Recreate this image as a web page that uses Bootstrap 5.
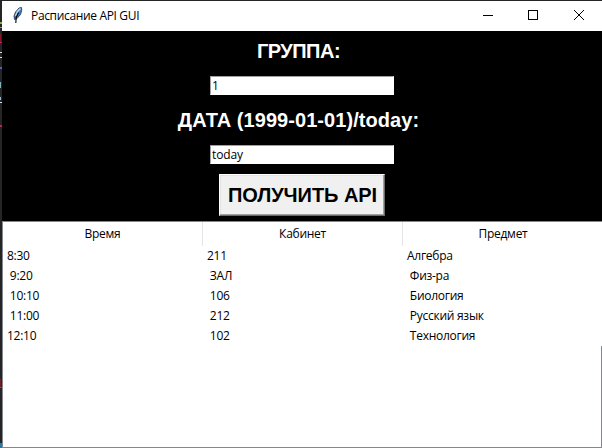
<!DOCTYPE html>
<html lang="ru">
<head>
<meta charset="utf-8">
<title>Расписание API GUI</title>
<link href="https://cdn.jsdelivr.net/npm/bootstrap@5.3.0/dist/css/bootstrap.min.css" rel="stylesheet">
<style>
  body { width: 602px; height: 448px; background: #252525; font: 12px/20px "Open Sans", "Noto Sans", sans-serif; color: #000; letter-spacing: -.27px; }
  .desk { width: 602px; height: 448px; padding: 1px 0 0 2px;
    background:
      linear-gradient(#8bb42a, #8bb42a) 0 22px / 2px 2px no-repeat,
      linear-gradient(#8bb42a, #8bb42a) 0 27px / 2px 1px no-repeat,
      linear-gradient(#7d1f22, #7d1f22) 0 34px / 1px 8px no-repeat,
      linear-gradient(#e0146a, #e0146a) 0 42px / 2px 1px no-repeat,
      linear-gradient(#ddd, #ddd) 0 52px / 2px 1px no-repeat,
      linear-gradient(#ddd, #ddd) 0 57px / 2px 1px no-repeat,
      linear-gradient(#4a63c0, #4a63c0) 0 67px / 2px 2px no-repeat,
      linear-gradient(#7fb5c0, #7fb5c0) 0 82px / 1px 6px no-repeat,
      linear-gradient(#8fb8e8, #8fb8e8) 0 97px / 1px 3px no-repeat,
      linear-gradient(#ddd, #ddd) 0 102px / 2px 1px no-repeat,
      linear-gradient(#c02060, #c02060) 0 125px / 2px 2px no-repeat,
      linear-gradient(#7d1f22, #7d1f22) 0 379px / 1px 8px no-repeat,
      linear-gradient(#e0146a, #e0146a) 0 387px / 2px 1px no-repeat,
      linear-gradient(#1a7db0, #1a7db0) 0 443px / 2px 5px no-repeat,
      #252525; }
  .titlebar { height: 30px; padding-left: 9px; }
  .feather { margin-bottom: 2px; }
  .caption { margin-left: 7px; letter-spacing: -.34px; }
  .form-area { height: 190px; }
  .form-title { font: bold 20px/24px "Liberation Sans", Arial, sans-serif; letter-spacing: .06px; margin-right: 7px; }
  .group-title { letter-spacing: -.5px; }
  .entry { width: 184px; height: 19px; margin-top: 13px; padding: 0 1px; font: inherit; letter-spacing: -.15px; line-height: 17px; color: #000; background: #fff; border: 1px solid; border-color: #a0a0a0 #fff #fff #a0a0a0; border-radius: 0; outline: 0; }
  .date-title { margin-top: 13px; }
  .tk-button { width: 166px; height: 42px; margin-top: 10px; padding: 0 0 0 1px; color: #000; background: #f0f0f0; border: 1px solid; border-color: #fff #696969 #696969 #fff; box-shadow: inset -1px -1px #a0a0a0, inset 1px 1px #e3e3e3; font: bold 20px/38px "Liberation Sans", Arial, sans-serif; letter-spacing: -.05px; }
  .tree { border-top: 1px solid #828790; border-left: 1px solid #828790; border-bottom: 1px solid #828790; height: 227px; }
  .cells > div { width: 200px; flex: none; white-space: pre; }
  .heads { height: 24px; line-height: 24px; text-align: center; }
  .heads > div { border-right: 1px solid #e5e5e5; }
  .heads > div:last-child { border: 0; }
  .line { height: 20px; }
  .line > div { padding-left: 4px; }
  .rest { border-right: 1px solid #828790; }
</style>
<script src="https://cdn.jsdelivr.net/npm/bootstrap@5.3.0/dist/js/bootstrap.bundle.min.js"></script>
</head>
<body class="m-0 overflow-hidden">
<div class="desk d-flex flex-column">
  <header class="titlebar bg-white d-flex align-items-center">
    <svg class="feather" width="13" height="18" viewBox="0 0 13 18">
      <path d="M10.500 1.500 8 2 4.500 6 3 10l.5 3.500 2.500-1L9.500 8.500l1.200-4z" fill="#3d7cc4" stroke="#27303f" stroke-width=".8"/>
      <path d="M9.500 2.500 6.500 5.500 4.500 10" fill="none" stroke="#b8dcf8" stroke-width="1.500"/>
      <path d="M7.500 6.500 5.200 11.500 4.800 17" fill="none" stroke="#000" stroke-width="1.100"/>
    </svg>
    <span class="caption">Расписание API GUI</span>
    <svg class="ms-auto" width="119" height="30" viewBox="483 1 119 30" fill="none" stroke="#000" shape-rendering="crispEdges">
      <path d="M483 15.500h10M528.500 10.500h9v9h-9z"/>
      <path d="M574 10l10 10M584 10l-10 10" shape-rendering="auto"/>
    </svg>
  </header>

  <main class="form-area bg-black text-white d-flex flex-column align-items-center">
    <label class="form-title group-title mt-2" for="group">ГРУППА:</label>
    <input class="entry" id="group" value="1">
    <label class="form-title date-title" for="date">ДАТА (1999-01-01)/today:</label>
    <input class="entry" id="date" value="today">
    <button class="tk-button" type="button">ПОЛУЧИТЬ API</button>
  </main>

  <section class="tree bg-white d-flex flex-column">
    <div class="cells heads d-flex"><div>Время</div><div>Кабинет</div><div>Предмет</div></div>
    <div class="cells line d-flex"><div>8:30</div><div>211</div><div>Алгебра</div></div>
    <div class="cells line d-flex"><div> 9:20</div><div> ЗАЛ</div><div> Физ-ра</div></div>
    <div class="cells line d-flex"><div> 10:10</div><div> 106</div><div> Биология</div></div>
    <div class="cells line d-flex"><div> 11:00</div><div> 212</div><div> Русский язык</div></div>
    <div class="cells line d-flex"><div>12:10</div><div> 102</div><div> Технология</div></div>
    <div class="rest flex-grow-1"></div>
  </section>
</div>
</body>
</html>
